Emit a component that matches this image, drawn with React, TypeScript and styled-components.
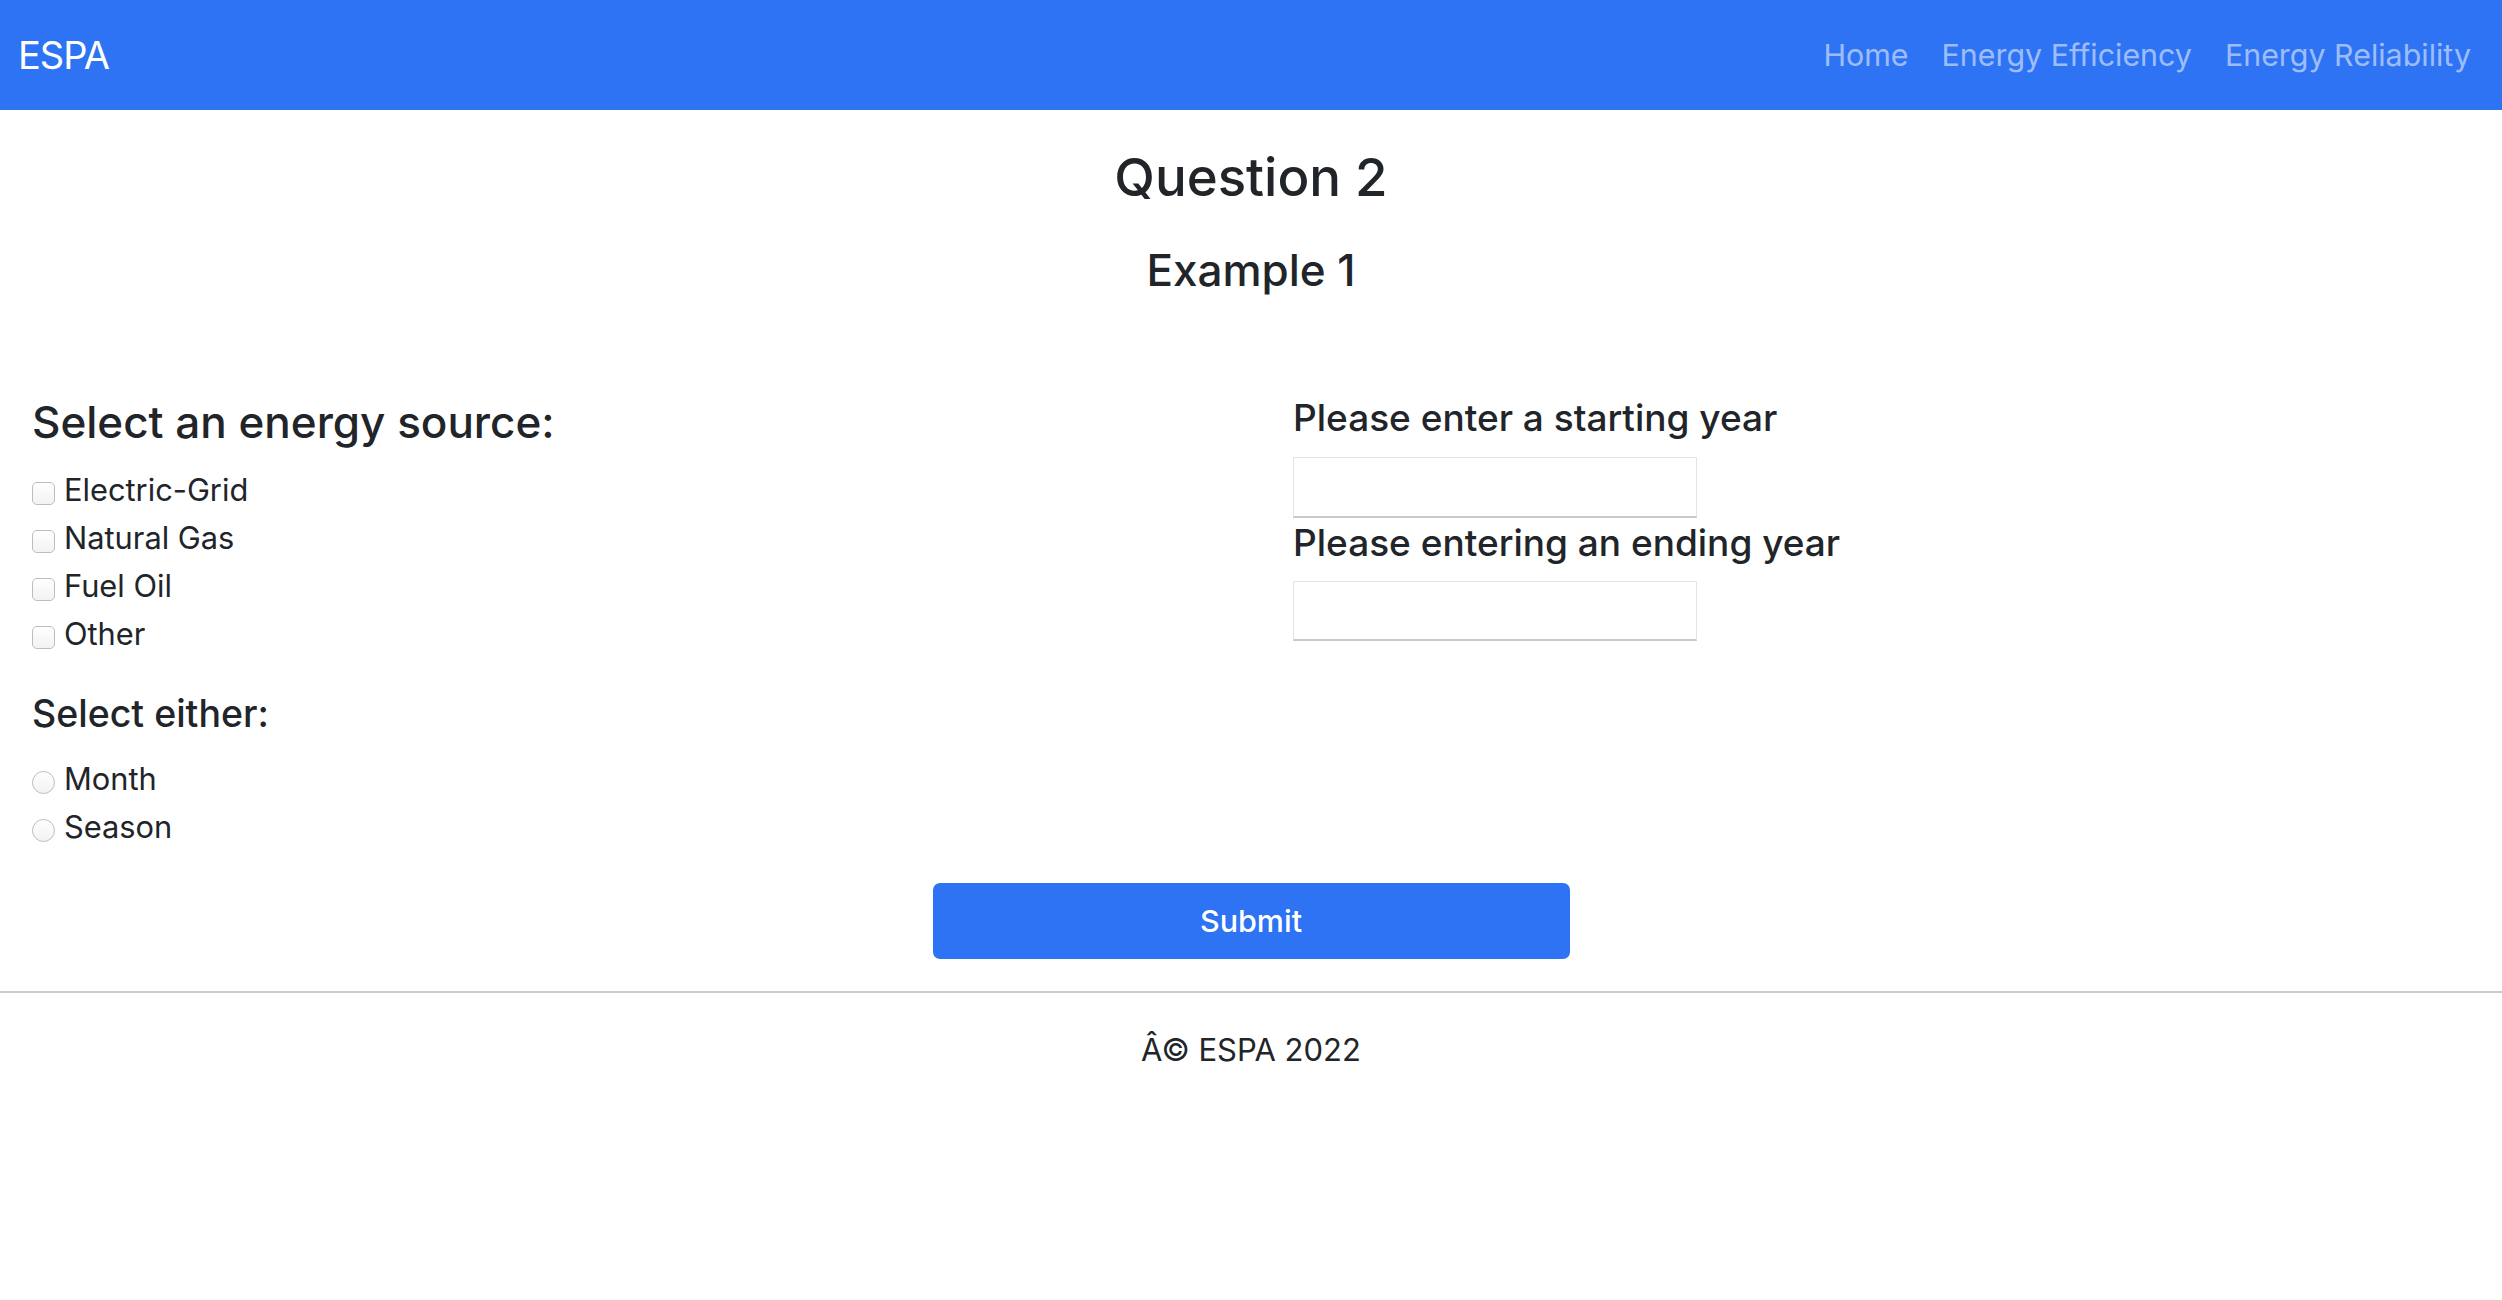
import React from "react";
import styled, { createGlobalStyle } from "styled-components";

const GlobalStyle = createGlobalStyle`
  html, body {
    margin: 0;
    padding: 0;
    background: #ffffff;
  }
  body {
    font-family: Inter, "Noto Sans", "Liberation Sans", sans-serif;
    color: #212529;
  }
  * { box-sizing: border-box; }
`;

const Navbar = styled.nav`
  height: 110px;
  background: #2d73f4;
  display: flex;
  align-items: center;
  justify-content: space-between;
  padding: 0 31px 0 18px;
`;

const Brand = styled.a`
  font-size: 38px;
  letter-spacing: -1px;
  font-weight: 400;
  color: #ffffff;
  text-decoration: none;
  line-height: 1;
`;

const NavLinks = styled.div`
  display: flex;
  align-items: center;
  gap: 33px;
`;

const NavLink = styled.a`
  font-size: 30.4px;
  color: rgba(255, 255, 255, 0.55);
  text-decoration: none;
  line-height: 1;
`;

const Header = styled.header`
  text-align: center;
  padding-top: 36px;
`;

const Title = styled.h2`
  margin: 0;
  font-size: 52.8px;
  font-weight: 500;
  line-height: 1.2;
`;

const Subtitle = styled.h3`
  margin: 35px 0 0;
  font-size: 44px;
  font-weight: 500;
  line-height: 1.2;
`;

const FormGrid = styled.form`
  display: grid;
  grid-template-columns: 1fr 1fr;
  column-gap: 84px;
  padding: 0 32px;
  margin-top: 99px;
`;

const Column = styled.div<{ $offset?: number }>`
  display: flex;
  flex-direction: column;
  padding-top: ${(p) => p.$offset ?? 0}px;
`;

const GroupTitle = styled.h3<{ $size: number; $gap: number }>`
  margin: 0 0 ${(p) => p.$gap}px;
  font-size: ${(p) => p.$size}px;
  font-weight: 500;
  line-height: 1.2;
`;

const OptionRow = styled.label`
  display: flex;
  align-items: center;
  height: 48px;
  font-size: 30.8px;
  line-height: 48px;
  gap: 9px;
`;

const Box = styled.span<{ $round?: boolean }>`
  width: 23px;
  height: 23px;
  margin-top: 7px;
  flex: none;
  border: 1px solid #bdbdbd;
  border-radius: ${(p) => (p.$round ? "50%" : "5px")};
  background: linear-gradient(#ffffff, #f2f2f2);
`;

const Spacer = styled.div<{ $h: number }>`
  height: ${(p) => p.$h}px;
`;

const FieldLabel = styled.label<{ $gap: number }>`
  display: block;
  font-size: 37px;
  font-weight: 500;
  line-height: 1.2;
  margin-bottom: ${(p) => p.$gap}px;
`;

const YearInput = styled.input<{ $h: number; $gap: number }>`
  width: 404px;
  height: ${(p) => p.$h}px;
  margin-bottom: ${(p) => p.$gap}px;
  border: 1px solid #e4e4e4;
  border-bottom: 2px solid #c9c9c9;
  background: #ffffff;
  font-size: 30px;
  padding: 0 8px;
  outline: none;
`;

const ButtonRow = styled.div`
  display: flex;
  justify-content: center;
  margin-top: 32px;
`;

const SubmitButton = styled.button`
  width: 637px;
  height: 76px;
  border: none;
  border-radius: 7px;
  background: #2d73f4;
  color: #ffffff;
  font-family: Inter, "Noto Sans", sans-serif;
  font-size: 30.5px;
  font-weight: 500;
  cursor: pointer;
`;

const Rule = styled.hr`
  margin: 32px 0 0;
  border: none;
  border-top: 2px solid #cccccc;
`;

const Footer = styled.footer`
  text-align: center;
  font-size: 31px;
  line-height: 48px;
  padding-top: 33px;
`;

const sources = ["Electric-Grid", "Natural Gas", "Fuel Oil", "Other"];
const periods = ["Month", "Season"];

export default function App() {
  return (
    <>
      <GlobalStyle />
      <Navbar>
        <Brand href="#">ESPA</Brand>
        <NavLinks>
          <NavLink href="#">Home</NavLink>
          <NavLink href="#">Energy Efficiency</NavLink>
          <NavLink href="#">Energy Reliability</NavLink>
        </NavLinks>
      </Navbar>
      <Header>
        <Title>Question 2</Title>
        <Subtitle>Example 1</Subtitle>
      </Header>
      <FormGrid onSubmit={(e) => e.preventDefault()}>
        <Column>
          <GroupTitle $size={44} $gap={17}>Select an energy source:</GroupTitle>
          {sources.map((s) => (
            <OptionRow key={s}>
              <Box />
              {s}
            </OptionRow>
          ))}
          <Spacer $h={33} />
          <GroupTitle $size={37.5} $gap={19}>Select either:</GroupTitle>
          {periods.map((s) => (
            <OptionRow key={s}>
              <Box $round />
              {s}
            </OptionRow>
          ))}
        </Column>
        <Column $offset={0}>
          <FieldLabel $gap={16}>Please enter a starting year</FieldLabel>
          <YearInput type="text" $h={61} $gap={3} />
          <FieldLabel $gap={16}>Please entering an ending year</FieldLabel>
          <YearInput type="text" $h={60} $gap={0} />
        </Column>
      </FormGrid>
      <ButtonRow>
        <SubmitButton type="button">Submit</SubmitButton>
      </ButtonRow>
      <Rule />
      <Footer>Â© ESPA 2022</Footer>
    </>
  );
}
